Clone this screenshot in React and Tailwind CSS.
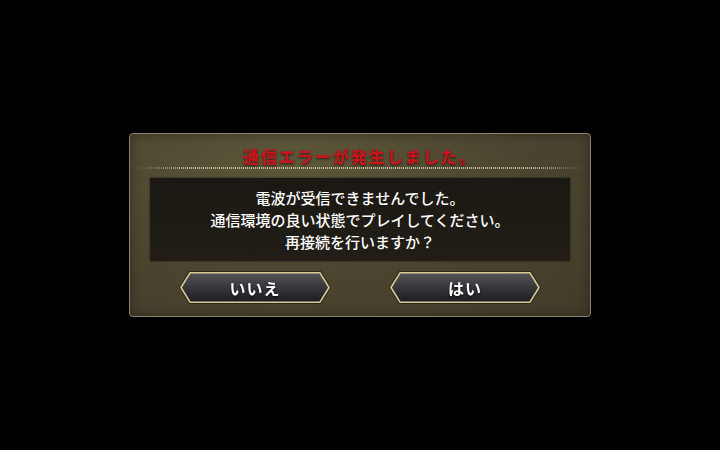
const HexButton = ({ id, label }) => (
  <button className="relative w-[152px] h-[33px] flex items-center justify-center">
    <svg className="absolute inset-0" width="152" height="33" viewBox="0 0 152 33">
      <defs>
        <linearGradient id={`fill-${id}`} x1="0" y1="0" x2="0" y2="1">
          <stop offset="0" stopColor="#57565b" />
          <stop offset="0.5" stopColor="#37363b" />
          <stop offset="1" stopColor="#1b1a1e" />
        </linearGradient>
      </defs>
      <path
        d="M10.5 1 H141.5 L151 16.5 L141.5 32 H10.5 L1 16.5 Z"
        fill={`url(#fill-${id})`}
        stroke="#2b271a"
        strokeWidth="2"
        strokeLinejoin="round"
      />
      <path
        d="M11 1.8 H141 L150 16.5 L141 31.2 H11 L2 16.5 Z"
        fill="none"
        stroke="#d8ca90"
        strokeWidth="1.6"
        strokeLinejoin="round"
      />
    </svg>
    <span className="relative text-white text-[16px] font-bold tracking-[1px] leading-none drop-shadow-[0_1px_1px_rgba(0,0,0,0.8)]">
      {label}
    </span>
  </button>
);

const App = () => {
  return (
    <div className="w-[720px] h-[450px] bg-black flex items-center justify-center font-['Noto_Sans_CJK_JP','Noto_Sans',sans-serif]">
      <div className="w-[462px] h-[184px] rounded-[4px] border border-[#8a846a] bg-[radial-gradient(ellipse_at_35%_15%,#5c5639_0%,#4b4530_55%,#413b28_100%)] shadow-[inset_0_0_12px_rgba(0,0,0,0.35)] flex flex-col items-center px-[20px]">
        <h1 className="mt-[12px] h-[20px] leading-[20px] text-[16px] font-black tracking-[2px] text-[#c8141b] drop-shadow-[0_1px_1px_rgba(0,0,0,0.6)]">
          通信エラーが発生しました。
        </h1>
        <div className="mt-[1px] w-[450px] h-[2px] bg-[repeating-linear-gradient(90deg,#c9bf98_0_1px,transparent_1px_2px)] [mask-image:linear-gradient(90deg,transparent,black_12%,black_88%,transparent)]" />
        <div className="mt-[9px] w-[420px] h-[83px] bg-[linear-gradient(180deg,#1b1813,#221e17)] shadow-[0_0_2px_rgba(0,0,0,0.6)] flex flex-col items-center justify-center text-white text-[15px] font-medium leading-[22px]">
          <p>電波が受信できませんでした。</p>
          <p>通信環境の良い状態でプレイしてください。</p>
          <p>再接続を行いますか？</p>
        </div>
        <div className="mt-[10px] flex gap-[58px]">
          <HexButton id="no" label="いいえ" />
          <HexButton id="yes" label="はい" />
        </div>
      </div>
    </div>
  );
};

export default App;
